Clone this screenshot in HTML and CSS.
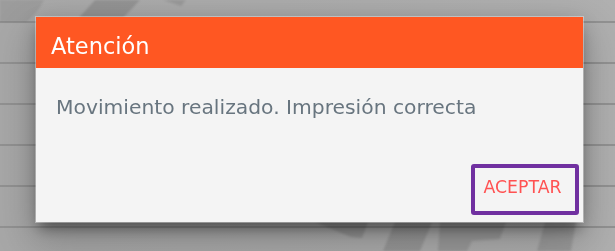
FILE: index.html
```html
<!DOCTYPE html>
<html lang="es">
<head>
<meta charset="utf-8">
<title>Atención</title>
<link rel="stylesheet" href="styles.css">
</head>
<body>
<div class="backdrop">
  <svg class="watermark" viewBox="0 0 615 251" aria-hidden="true">
    <defs>
      <filter id="soft"><feGaussianBlur stdDeviation="1.2"/></filter>
    </defs>
    <g filter="url(#soft)" fill="#000">
      <path d="M0 0 H44 Q38 13 26 22 H0 Z" opacity="0.07"/>
      <polygon points="95,0 140,0 121,20 77,20" opacity="0.13"/>
      <polygon points="163,0 186,0 181,6" opacity="0.1"/>
      <polygon points="315,222 368,222 362,238 351,237" opacity="0.12"/>
      <polygon points="395,222 432,222 420,251 383,251" opacity="0.12"/>
      <polygon points="440,222 506,222 500,239 472,241 467,251 438,251" opacity="0.11"/>
      <polygon points="545,222 576,222 571,251 537,251" opacity="0.11"/>
    </g>
  </svg>
  <div class="dialog" role="dialog">
    <div class="dialog-header">
      <h2 class="dialog-title">Atención</h2>
    </div>
    <div class="dialog-content">
      <p class="dialog-message">Movimiento realizado. Impresión correcta</p>
    </div>
    <div class="dialog-actions">
      <button class="btn-accept" type="button">ACEPTAR</button>
    </div>
  </div>
</div>
</body>
</html>
```
FILE: styles.css
```css
html, body {
  margin: 0;
  height: 100%;
}

body {
  background: #aaaaaa;
  font-family: "DejaVu Sans", "Noto Sans", sans-serif;
  overflow: hidden;
}

.backdrop {
  position: relative;
  height: 251px;
  box-sizing: border-box;
  padding: 17px 0 0 36px;
  background:
    repeating-linear-gradient(to bottom,
      transparent 0, transparent 21px,
      #929292 21px, #929292 23px,
      transparent 23px, transparent 41px),
    linear-gradient(to right, #a8a8a8, #acacac 60%, #b0b0b0);
}

.watermark {
  position: absolute;
  left: 0;
  top: 0;
  width: 615px;
  height: 251px;
}

.dialog {
  position: relative;
  width: 547px;
  height: 205px;
  box-sizing: border-box;
  display: flex;
  flex-direction: column;
  background: #f4f4f4;
  box-shadow:
    0 0 0 1px rgba(255, 255, 255, 0.35),
    0 10px 12px -4px rgba(0, 0, 0, 0.36),
    0 18px 38px 6px rgba(0, 0, 0, 0.2),
    0 4px 20px 2px rgba(0, 0, 0, 0.12);
}

.dialog-header {
  height: 51px;
  box-sizing: border-box;
  padding: 16px 15px 0;
  background: #ff5722;
}

.dialog-title {
  margin: 0;
  font-size: 22.5px;
  line-height: 26px;
  font-weight: normal;
  color: #ffffff;
}

.dialog-content {
  padding: 28px 20px 0;
}

.dialog-message {
  margin: 0;
  font-size: 20.3px;
  line-height: 23px;
  color: #68757f;
}

.dialog-actions {
  margin-top: auto;
  display: flex;
  justify-content: flex-end;
  padding: 0 4px 7px;
}

.btn-accept {
  width: 108px;
  height: 51px;
  box-sizing: border-box;
  padding: 9px 13px 14px 8px;
  border: 4px solid #7030a0;
  border-radius: 3px;
  background: transparent;
  font-family: inherit;
  font-size: 17.3px;
  line-height: 20px;
  color: #ff5252;
  text-align: center;
  cursor: pointer;
}
```
